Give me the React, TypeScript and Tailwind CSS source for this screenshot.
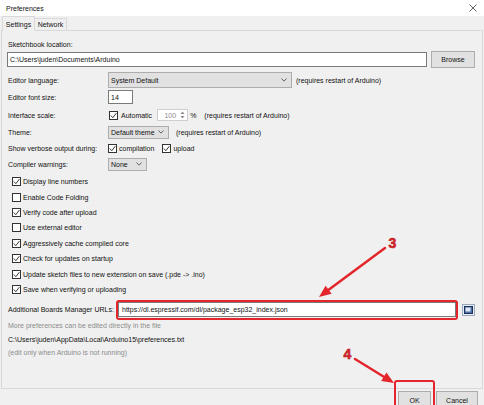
import React from 'react';

function Check({ checked }: { checked?: boolean }) {
  return (
    <span className="w-[9px] h-[9px] border border-[#333] bg-white flex items-center justify-center shrink-0">
      {checked && (
        <svg viewBox="0 0 7 7" className="w-[7px] h-[7px]">
          <path d="M0.8 3.5 L2.8 5.7 L6.4 1.1" fill="none" stroke="#222" strokeWidth="0.9" />
        </svg>
      )}
    </span>
  );
}

function Chevron() {
  return (
    <svg viewBox="0 0 6 4" className="w-[6px] h-[4px] shrink-0">
      <polyline points="0.5,0.5 3,3.2 5.5,0.5" fill="none" stroke="#444" strokeWidth="0.8" />
    </svg>
  );
}

function Select({ value, width }: { value: string; width: string }) {
  return (
    <div className={`${width} h-full bg-[#e1e1e1] border border-[#adadad] flex items-center justify-between pl-[2px] pr-[4px]`}>
      <span>{value}</span>
      <Chevron />
    </div>
  );
}

const checks: [string, boolean][] = [
  ['Display line numbers', true],
  ['Enable Code Folding', false],
  ['Verify code after upload', true],
  ['Use external editor', false],
  ['Aggressively cache compiled core', true],
  ['Check for updates on startup', true],
  ['Update sketch files to new extension on save (.pde -> .ino)', true],
  ['Save when verifying or uploading', true],
];

export default function App() {
  return (
    <div className="relative w-[484px] h-[405px] overflow-hidden bg-[#f0f0f0] text-[7px] leading-none text-[#111] font-['Liberation_Sans',Arial,sans-serif]">
      {/* title bar */}
      <div className="h-[16px] bg-white flex items-center justify-between pl-[6px] pr-[7px]">
        <span>Preferences</span>
        <svg viewBox="0 0 8 8" className="w-[8px] h-[8px]">
          <path d="M0.5 0.5 L7.5 7.5 M7.5 0.5 L0.5 7.5" stroke="#222" strokeWidth="0.7" />
        </svg>
      </div>

      {/* tabs */}
      <div className="h-[14px] flex items-end pl-[2px] relative z-10">
        <div className="h-[15px] w-[33px] bg-[#f0f0f0] border-t border-l border-r border-[#d9d9d9] flex items-center justify-center -mb-[1px]">
          Settings
        </div>
        <div className="h-[12px] w-[32px] bg-[#f0f0f0] border-t border-r border-[#d9d9d9] flex items-center justify-center">
          Network
        </div>
      </div>

      {/* panel */}
      <div className="mx-[1px] h-[359px] border border-[#d9d9d9] pl-[6px] pr-[6px] pt-[7px] flex flex-col">
        <div className="h-[12px] flex items-center">Sketchbook location:</div>
        <div className="h-[19px] flex items-center gap-[4px] -ml-[1px]">
          <div className="w-[420px] h-[15px] bg-white border border-[#7a7a7a] flex items-center pl-[2px]">
            C:\Users\juden\Documents\Arduino
          </div>
          <div className="w-[44px] h-[17px] bg-[#e1e1e1] border border-[#adadad] flex items-center justify-center">
            Browse
          </div>
        </div>

        <div className="h-[18px] mt-[2px] flex items-center">
          <span className="w-[100px]">Editor language:</span>
          <div className="h-[16px] flex items-center">
            <Select value="System Default" width="w-[184px]" />
          </div>
          <span className="ml-[4px]">(requires restart of Arduino)</span>
        </div>

        <div className="h-[16px] flex items-center">
          <span className="w-[100px]">Editor font size:</span>
          <div className="w-[25px] h-[14px] bg-white border border-[#7a7a7a] flex items-center pl-[2px]">14</div>
        </div>

        <div className="h-[18px] mt-[1px] flex items-center">
          <span className="w-[101px]">Interface scale:</span>
          <Check checked />
          <span className="ml-[3px]">Automatic</span>
          <div className="ml-[5px] w-[31px] h-[12px] bg-white border border-[#cfcfcf] flex items-center justify-end pr-[2px] gap-[4px] text-[#8a8a8a]">
            <span>100</span>
            <svg viewBox="0 0 5 8" className="w-[5px] h-[8px]">
              <polygon points="2.5,0.5 4.5,3 0.5,3" fill="#8a8a8a" />
              <polygon points="0.5,5 4.5,5 2.5,7.5" fill="#8a8a8a" />
            </svg>
          </div>
          <span className="ml-[2px]">%</span>
          <span className="ml-[8px]">(requires restart of Arduino)</span>
        </div>

        <div className="h-[16px] flex items-center">
          <span className="w-[100px]">Theme:</span>
          <div className="h-[13px] flex items-center">
            <Select value="Default theme" width="w-[61px]" />
          </div>
          <span className="ml-[7px]">(requires restart of Arduino)</span>
        </div>

        <div className="h-[16px] flex items-center">
          <span className="w-[100px]">Show verbose output during:</span>
          <Check checked />
          <span className="ml-[2px]">compilation</span>
          <span className="ml-[8px]"><Check checked /></span>
          <span className="ml-[2px]">upload</span>
        </div>

        <div className="h-[16px] flex items-center">
          <span className="w-[100px]">Compiler warnings:</span>
          <div className="h-[13px] flex items-center">
            <Select value="None" width="w-[39px]" />
          </div>
        </div>

        <div className="mt-[2px] pl-[4px] flex flex-col">
          {checks.map(([label, on]) => (
            <div key={label} className="h-[15.4px] flex items-center gap-[2px]">
              <Check checked={on} />
              <span>{label}</span>
            </div>
          ))}
        </div>

        <div className="h-[18px] mt-[3.5px] flex items-center">
          <span className="w-[110px]">Additional Boards Manager URLs:</span>
          <div className="w-[338px] h-[15px] bg-white border border-[#7a7a7a] flex items-center pl-[3px]">
            https://dl.espressif.com/dl/package_esp32_index.json
          </div>
          <svg viewBox="0 0 13 12" className="ml-[6px] w-[13px] h-[12px]">
            <rect x="0.5" y="0.5" width="12" height="11" fill="#e8eef6" stroke="#9aa8bb" />
            <rect x="2.5" y="2.5" width="8" height="7" fill="#4b6fa8" stroke="#1f2f55" />
            <rect x="3.5" y="3.5" width="5" height="4" fill="#dfe8f4" />
          </svg>
        </div>
        <div className="h-[14px] flex items-center text-[#8c8c8c]">More preferences can be edited directly in the file</div>
        <div className="h-[13px] flex items-center">C:\Users\juden\AppData\Local\Arduino15\preferences.txt</div>
        <div className="h-[13px] flex items-center text-[#8c8c8c]">(edit only when Arduino is not running)</div>
      </div>

      {/* bottom buttons */}
      <div className="flex justify-end gap-[5px] pr-[6px] pt-[2px]">
        <div className="w-[33px] h-[18px] bg-[#e1e1e1] border border-[#adadad] flex items-center justify-center">OK</div>
        <div className="w-[42px] h-[18px] bg-[#e1e1e1] border border-[#adadad] flex items-center justify-center">Cancel</div>
      </div>

      {/* annotations */}
      <svg className="absolute inset-0 pointer-events-none" width="484" height="405" viewBox="0 0 484 405">
        <rect x="117" y="301" width="340" height="18" rx="2" fill="none" stroke="#e3262c" strokeWidth="2" />
        <rect x="395" y="381" width="39" height="32" rx="2" fill="none" stroke="#e3262c" strokeWidth="2" />
        <line x1="385" y1="248" x2="327" y2="291" stroke="#e3262c" strokeWidth="2.5" strokeLinecap="round" />
        <polygon points="319,297 331.6,293.8 325.6,285.8" fill="#e3262c" />
        <line x1="355" y1="359" x2="385" y2="377.5" stroke="#e3262c" strokeWidth="2.5" strokeLinecap="round" />
        <polygon points="394,383 381.2,381 386.4,372.4" fill="#e3262c" />
        <text x="388.5" y="248" fontSize="14" fontWeight="900" fill="#e3262c" stroke="#b51d22" strokeWidth="0.6" fontFamily="'Liberation Sans', Arial, sans-serif">3</text>
        <text x="343.5" y="359" fontSize="14" fontWeight="900" fill="#e3262c" stroke="#b51d22" strokeWidth="0.6" fontFamily="'Liberation Sans', Arial, sans-serif">4</text>
      </svg>
    </div>
  );
}
